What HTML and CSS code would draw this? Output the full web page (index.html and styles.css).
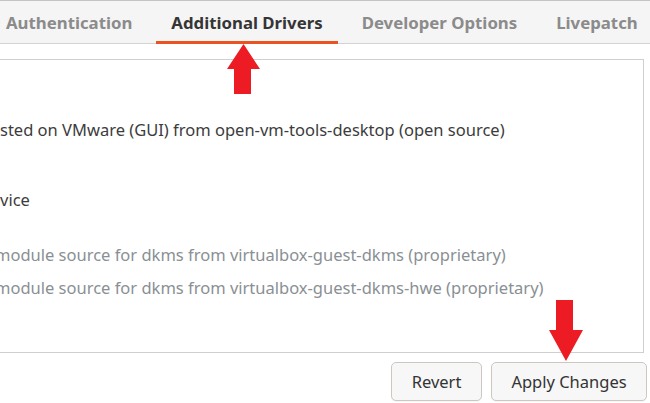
FILE: index.html
```html
<!DOCTYPE html>
<html lang="en">
<head>
<meta charset="utf-8">
<title>Software &amp; Updates — Additional Drivers</title>
<link rel="stylesheet" href="styles.css">
</head>
<body>
<div class="window">
  <header class="tabbar">
    <div class="tab">Authentication</div>
    <div class="tab active">Additional Drivers</div>
    <div class="tab">Developer Options</div>
    <div class="tab">Livepatch</div>
  </header>
  <main class="content">
    <section class="drivers">
      <div class="row r1">sted on VMware (GUI) from open-vm-tools-desktop (open source)</div>
      <div class="row r2">vice</div>
      <div class="row muted r3"><span class="cut">module source for dkms from virtualbox-guest-dkms (proprietary)</span></div>
      <div class="row muted r4"><span class="cut">module source for dkms from virtualbox-guest-dkms-hwe (proprietary)</span></div>
    </section>
    <div class="actions">
      <button class="btn btn-revert">Revert</button>
      <button class="btn btn-apply">Apply Changes</button>
    </div>
  </main>
  <svg class="arrow arrow-up" width="33" height="50" viewBox="0 0 33 50">
    <polygon points="16.5,0 33,25 24,25 24,50 7,50 7,25 0,25" fill="#ed1c24"/>
  </svg>
  <svg class="arrow arrow-down" width="34" height="61" viewBox="0 0 34 61">
    <polygon points="7,0 24,0 24,30 34,30 17,61 0,30 7,30" fill="#ed1c24"/>
  </svg>
</div>
</body>
</html>
```
FILE: styles.css
```css
html, body {
  margin: 0;
  padding: 0;
}
body {
  width: 650px;
  height: 403px;
  overflow: hidden;
  background: #ffffff;
  font-family: "Noto Sans", "Open Sans", sans-serif;
  color: #3c3c3c;
}
.window {
  position: relative;
  width: 650px;
  height: 403px;
  overflow: hidden;
  background: #ffffff;
}
.tabbar {
  box-sizing: border-box;
  height: 44px;
  display: flex;
  gap: 9px;
  margin-left: -9px;
  border-top: 1px solid #c4c4c4;
  background: #f5f5f5;
  box-shadow: inset 0 -1px 0 #d3d3d3;
}
.tab {
  display: flex;
  align-items: center;
  padding: 0 15px 1px;
  font-size: 16.8px;
  font-weight: 700;
  color: #8b8b8b;
  white-space: nowrap;
}
.tab.active {
  color: #353535;
  box-shadow: inset 0 -3px 0 #e95420;
}
.content {
  padding: 15px 6px 0 0;
}
.drivers {
  box-sizing: border-box;
  height: 294px;
  margin-left: -3px;
  border: 1px solid #cfcfcf;
  background: #ffffff;
  padding-left: 2px;
  overflow: hidden;
}
.row {
  font-size: 16.5px;
  line-height: 20px;
  white-space: nowrap;
}
.r1 { margin-top: 60px; }
.r2 { margin-top: 50px; }
.r3 { margin-top: 35px; }
.r4 { margin-top: 13px; }
.muted {
  color: #8a8f94;
}
.cut {
  display: inline-block;
  margin-left: -5px;
}
.actions {
  display: flex;
  justify-content: flex-end;
  gap: 9px;
  padding-top: 9px;
  margin-right: -3px;
}
.btn {
  box-sizing: border-box;
  height: 39px;
  padding: 0;
  border: 1px solid #cdc7c2;
  border-radius: 5px;
  background: #f7f7f7;
  font-family: inherit;
  font-size: 16.5px;
  color: #333333;
  box-shadow: 0 1px 0 rgba(0, 0, 0, 0.04);
}
.btn-revert { width: 91px; }
.btn-apply { width: 156px; }
.arrow {
  position: absolute;
}
.arrow-up {
  left: 227px;
  top: 44px;
}
.arrow-down {
  left: 549px;
  top: 300px;
}
```
